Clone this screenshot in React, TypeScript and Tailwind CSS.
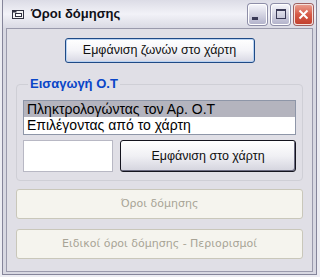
import React from "react";

const font = { fontFamily: '"Liberation Sans", Arial, sans-serif' };
const wide = { fontFamily: '"DejaVu Sans", Verdana, sans-serif' };

const TitleIcon = () => (
  <svg width="13" height="11" viewBox="0 0 13 11" className="shrink-0">
    <rect x="0.5" y="1.5" width="11" height="8" fill="#f4f4f4" stroke="#303040" />
    <rect x="0.5" y="1.5" width="4" height="2" fill="#303040" />
    <rect x="3.5" y="4.5" width="6" height="3" fill="#ffffff" stroke="#303040" />
  </svg>
);

const CaptionButton = ({ kind }: { kind: "min" | "max" | "close" }) => {
  const isClose = kind === "close";
  return (
    <div
      className={
        "flex h-[21px] w-[19px] items-center justify-center rounded-[3px] border " +
        (isClose
          ? "border-[#f4e0dc] bg-gradient-to-b from-[#e89a8c] via-[#d65a48] to-[#c2402e] shadow-[0_0_0_1px_#a06060]"
          : "border-[#ffffff] bg-gradient-to-b from-[#f4f4fa] via-[#d4d4e2] to-[#b4b4cc] shadow-[0_0_0_1px_#8e8ea8]")
      }
    >
      {kind === "min" && <div className="mt-[9px] mr-[5px] h-[3px] w-[6px] bg-[#3a3a56]" />}
      {kind === "max" && (
        <div className="h-[10px] w-[10px] border border-t-[2px] border-[#3a3a56]" />
      )}
      {isClose && (
        <svg width="11" height="11" viewBox="0 0 11 11">
          <path d="M1.5 1.5 L9.5 9.5 M9.5 1.5 L1.5 9.5" stroke="#ffffff" strokeWidth="2" />
        </svg>
      )}
    </div>
  );
};

export default function App() {
  return (
    <div className="h-[277px] w-[320px] overflow-hidden bg-[#ececf2]" style={font}>
      <div className="ml-[2px] flex h-[275px] w-[315px] flex-col border border-t-0 border-[#85859a] bg-[#d8d8e2]">
        {/* title bar */}
        <div className="flex h-[28px] items-center bg-gradient-to-b from-[#dcdce6] via-[#f2f2f8] to-[#dadae4] pl-[9px] pr-[3px]">
          <TitleIcon />
          <span className="ml-[6px] text-[13px] font-bold text-[#101018]">Όροι δόμησης</span>
          <div className="ml-auto flex items-center gap-[4px]">
            <CaptionButton kind="min" />
            <CaptionButton kind="max" />
            <CaptionButton kind="close" />
          </div>
        </div>

        {/* client area */}
        <div className="mx-[3px] mb-[2px] flex flex-1 flex-col border border-[#9a9aac] bg-[#e0dfe6] px-[9px]">
          <button className="mx-auto mt-[9px] flex h-[25px] w-[190px] items-center justify-center rounded-[3px] border border-[#1f4a86] bg-gradient-to-b from-[#ffffff] via-[#f4f4f8] to-[#d8d8e4] text-[12.5px] text-[#101010] shadow-[inset_0_0_0_1px_#b8d2f2]">
            Εμφάνιση ζωνών στο χάρτη
          </button>

          <fieldset className="mt-[13px] rounded-[4px] border border-[#cfcfd6] px-[6px] pb-[8px]">
            <legend className="ml-[5px] px-[2px] text-[13px] leading-[16px] font-bold text-[#0a46c8]">
              Εισαγωγή Ο.Τ
            </legend>
            <div className="mt-[8px] flex h-[35px] flex-col border border-[#8e96a8] bg-white text-[14px] leading-[16px] text-black">
              <div className="bg-[#b4b4be] px-[3px]">Πληκτρολογώντας τον Αρ. Ο.Τ</div>
              <div className="px-[3px]">Επιλέγοντας από το χάρτη</div>
            </div>
            <div className="mt-[5px] flex gap-[7px]">
              <div className="h-[32px] w-[90px] border border-[#b8b8c4] bg-white" />
              <button className="flex h-[32px] flex-1 items-center justify-center rounded-[3px] border border-[#14141e] bg-gradient-to-b from-[#ffffff] via-[#f0f0f4] to-[#d4d4de] text-[12.5px] text-[#101010] shadow-[inset_-1px_-1px_0_#6a6a80]">
                Εμφάνιση στο χάρτη
              </button>
            </div>
          </fieldset>

          <div className="mt-[8px] flex flex-col gap-[10px]" style={wide}>
            <button className="flex h-[30px] items-center justify-center rounded-[3px] border border-[#c9c7ba] bg-[#f5f4ee] text-[11px] text-[#a8a496]">
              Όροι δόμησης
            </button>
            <button className="flex h-[30px] items-center justify-center rounded-[3px] border border-[#c9c7ba] bg-[#f5f4ee] text-[11px] text-[#a8a496]">
              Ειδικοί όροι δόμησης - Περιορισμοί
            </button>
          </div>
        </div>
      </div>
    </div>
  );
}
